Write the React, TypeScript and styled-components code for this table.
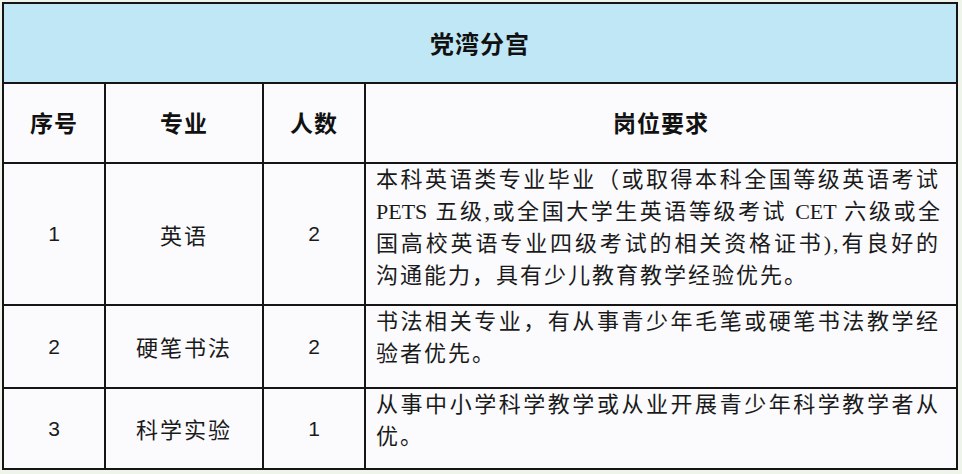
import React from "react";
import styled, { createGlobalStyle } from "styled-components";

const GlobalStyle = createGlobalStyle`
  html, body {
    margin: 0;
    padding: 0;
    background: #eef4ea;
  }
  body {
    font-family: "Noto Sans CJK SC", "Liberation Sans", sans-serif;
    color: #111;
  }
`;

const Page = styled.div`
  width: 962px;
  height: 474px;
  padding: 2px 4px 0 2px;
  box-sizing: border-box;
  overflow: hidden;
`;

const Table = styled.table`
  width: 956px;
  border-collapse: collapse;
  table-layout: fixed;
  background: #fbfbfe;
`;

const Cell = styled.td<{ $h?: number }>`
  border: 2px solid #151515;
  height: ${(p) => (p.$h ? `${p.$h}px` : "auto")};
  padding: 0;
  text-align: center;
  vertical-align: middle;
  font-size: 22px;
  line-height: 1.2;
  color: #1a1a1a;
`;

const TitleCell = styled(Cell)`
  background: #bfe7f5;
  font-size: 24px;
  font-weight: 700;
  letter-spacing: 1px;
  color: #111;
`;

const HeadCell = styled(Cell)`
  font-size: 23px;
  font-weight: 700;
  letter-spacing: 1px;
  color: #111;
`;

const NumCell = styled(Cell)`
  font-family: "Liberation Sans", sans-serif;
  font-size: 21px;
`;

const NameCell = styled(Cell)`
  letter-spacing: 2px;
`;

const DescCell = styled(Cell)`
  text-align: left;
  vertical-align: top;
  padding: 0 16px 0 10px;
  font-family: "Liberation Serif", "Noto Sans CJK SC", serif;
`;

const Line = styled.div<{ $last?: boolean; $mixed?: boolean }>`
  font-size: 22px;
  height: 32px;
  line-height: 32px;
  letter-spacing: ${(p) => (p.$mixed ? "0" : "2px")};
  text-align: ${(p) => (p.$last ? "left" : "justify")};
  text-align-last: ${(p) => (p.$last ? "left" : "justify")};
  white-space: nowrap;
`;

type Row = {
  no: string;
  name: string;
  count: string;
  lines: string[];
  h: number;
};

const rows: Row[] = [
  {
    no: "1",
    name: "英语",
    count: "2",
    h: 140,
    lines: [
      "本科英语类专业毕业（或取得本科全国等级英语考试",
      "PETS 五级,或全国大学生英语等级考试 CET 六级或全",
      "国高校英语专业四级考试的相关资格证书),有良好的",
      "沟通能力，具有少儿教育教学经验优先。",
    ],
  },
  {
    no: "2",
    name: "硬笔书法",
    count: "2",
    h: 81,
    lines: ["书法相关专业，有从事青少年毛笔或硬笔书法教学经", "验者优先。"],
  },
  {
    no: "3",
    name: "科学实验",
    count: "1",
    h: 79,
    lines: ["从事中小学科学教学或从业开展青少年科学教学者从", "优。"],
  },
];

export default function App() {
  return (
    <>
      <GlobalStyle />
      <Page>
        <Table>
          <colgroup>
            <col style={{ width: 102 }} />
            <col style={{ width: 158 }} />
            <col style={{ width: 102 }} />
            <col />
          </colgroup>
          <tbody>
            <tr>
              <TitleCell colSpan={4} $h={78}>
                党湾分宫
              </TitleCell>
            </tr>
            <tr>
              <HeadCell $h={78}>序号</HeadCell>
              <HeadCell>专业</HeadCell>
              <HeadCell>人数</HeadCell>
              <HeadCell>岗位要求</HeadCell>
            </tr>
            {rows.map((r) => (
              <tr key={r.no}>
                <NumCell $h={r.h}>{r.no}</NumCell>
                <NameCell>{r.name}</NameCell>
                <NumCell>{r.count}</NumCell>
                <DescCell>
                  {r.lines.map((l, i) => (
                    <Line
                      key={i}
                      $last={i === r.lines.length - 1}
                      $mixed={/[A-Z]/.test(l)}
                    >
                      {l}
                    </Line>
                  ))}
                </DescCell>
              </tr>
            ))}
          </tbody>
        </Table>
      </Page>
    </>
  );
}
